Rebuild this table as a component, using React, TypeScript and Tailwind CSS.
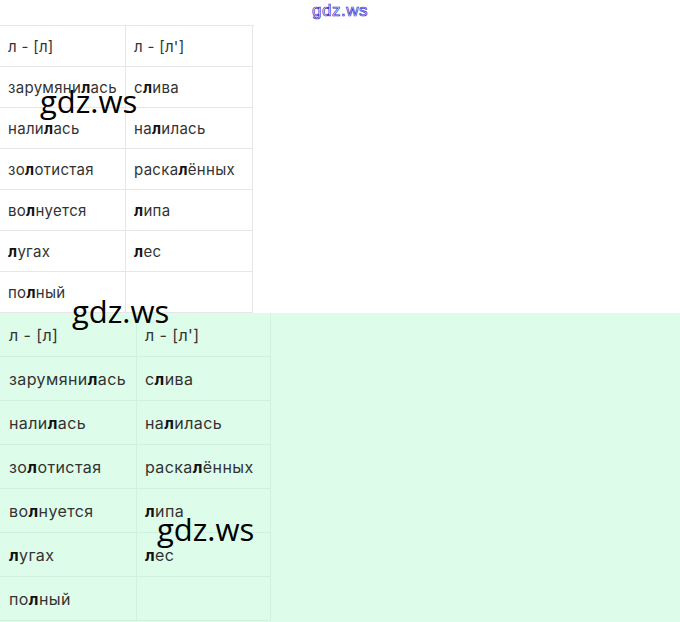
const rows: [string, string][] = [
  ["л - [л]", "л - [л']"],
  ["зарумяни*л*ась", "с*л*ива"],
  ["нали*л*ась", "на*л*илась"],
  ["зо*л*отистая", "раска*л*ённых"],
  ["во*л*нуется", "*л*ипа"],
  ["*л*угах", "*л*ес"],
  ["по*л*ный", ""],
];

// words come with the marked letter between asterisks
const Word = ({ text }: { text: string }) => {
  const parts = text.split("*");
  return (
    <>
      {parts.map((p, i) =>
        i % 2 === 1 ? (
          <b key={i} className="font-bold text-[#111]">
            {p}
          </b>
        ) : (
          <span key={i}>{p}</span>
        )
      )}
    </>
  );
};

const Mark = ({ className }: { className: string }) => (
  <div
    className={`absolute font-['Open_Sans',sans-serif] text-[31px] leading-none text-black pointer-events-none ${className}`}
  >
    gdz.ws
  </div>
);

export default function App() {
  return (
    <div className="relative w-[680px] h-[622px] bg-white font-['Inter',sans-serif] text-[#333] overflow-hidden">
      <div className="h-[25px] flex justify-center">
        <span className="pt-[2px] text-[17px] leading-[18px] tracking-[0.5px] font-['Liberation_Sans',sans-serif] text-transparent [-webkit-text-stroke:0.7px_#2a2ac8]">
          gdz.ws
        </span>
      </div>

      <div className="grid grid-cols-[126px_127px] w-[254px] border-t border-[#e6e6e6]">
        {rows.map(([a, b], i) => (
          <div key={i} className="contents">
            <div className="h-[41px] flex items-center pl-2 pt-[2px] text-[15px] tracking-[0.3px] border-b border-r border-[#e6e6e6]">
              <Word text={a} />
            </div>
            <div className="h-[41px] flex items-center pl-2 pt-[2px] text-[15px] tracking-[0.3px] border-b border-r border-[#e6e6e6]">
              <Word text={b} />
            </div>
          </div>
        ))}
      </div>

      <div className="bg-[#ddfce9] h-[310px]">
        <div className="grid grid-cols-[137px_134px] w-[271px]">
          {rows.map(([a, b], i) => (
            <div key={i} className="contents">
              <div className="h-[44px] flex items-center pl-[9px] text-[16px] tracking-[0.4px] border-b border-r border-[#d0f2dd]">
                <Word text={a} />
              </div>
              <div className="h-[44px] flex items-center pl-2 text-[16px] tracking-[0.4px] border-b border-r border-[#d0f2dd]">
                <Word text={b} />
              </div>
            </div>
          ))}
        </div>
      </div>

      <Mark className="left-[40px] top-[86px]" />
      <Mark className="left-[72px] top-[296px]" />
      <Mark className="left-[157px] top-[514px]" />
    </div>
  );
}
